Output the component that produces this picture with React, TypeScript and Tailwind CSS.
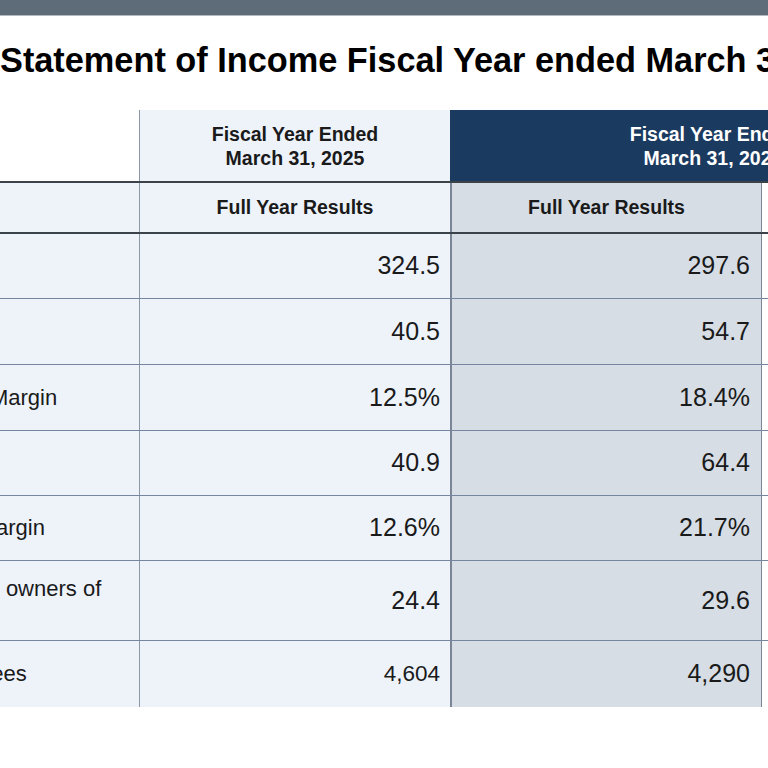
import React from "react";

type Row = { label: React.ReactNode; a: string; b: string; h: string; smallA?: boolean };

const rows: Row[] = [
  { label: "Net Sales", a: "324.5", b: "297.6", h: "h-[65px]" },
  { label: "Operating Income", a: "40.5", b: "54.7", h: "h-[66px]" },
  { label: "Operating Income Margin", a: "12.5%", b: "18.4%", h: "h-[66px]" },
  { label: "Ordinary Income", a: "40.9", b: "64.4", h: "h-[65px]" },
  { label: "Ordinary Income Margin", a: "12.6%", b: "21.7%", h: "h-[65px]" },
  {
    label: (
      <>
        Profit attributable to owners of
        <br />
        parent
      </>
    ),
    a: "24.4",
    b: "29.6",
    h: "h-[80px]",
  },
  { label: "Number of Employees", a: "4,604", b: "4,290", h: "h-[66px]", smallA: true },
];

export default function App() {
  return (
    <div className="w-[768px] h-[768px] overflow-hidden bg-white font-['Liberation_Sans',Arial,sans-serif] text-[#1a1a1a]">
      <div className="h-[16px] bg-[#5e6b79] border-b border-[#b3b9bf]" />
      <div className="mt-[24px] h-[40px] leading-[40px] text-[34.3px] font-bold text-black whitespace-nowrap">
        Statement of Income Fiscal Year ended March 31, 2026
      </div>
      <div className="mt-[30px] ml-[-200px] w-[1176px] flex flex-col">
        {/* header row 1 */}
        <div className="flex h-[73px] border-b-2 border-[#3c424a]">
          <div className="w-[340px] bg-white border-r border-[#8d98a6]" />
          <div className="w-[310px] bg-[#eef3fa] flex flex-col items-center justify-center text-[19.5px] leading-[24px] font-bold text-[#1a1a1a]">
            <span>Fiscal Year Ended</span>
            <span>March 31, 2025</span>
          </div>
          <div className="w-[526px] bg-[#1b3a5f] flex flex-col items-center justify-center text-[19.5px] leading-[24px] font-bold text-white">
            <span>Fiscal Year Ended</span>
            <span>March 31, 2026</span>
          </div>
        </div>
        {/* header row 2 */}
        <div className="flex h-[51px] border-b-2 border-[#3c424a]">
          <div className="w-[340px] bg-[#eef3fa] border-r border-[#8d98a6]" />
          <div className="w-[310px] bg-[#eef3fa] flex items-center justify-center text-[19.5px] font-bold">
            Full Year Results
          </div>
          <div className="w-[312px] bg-[#d6dde5] border-l-2 border-r border-[#7a8595] flex items-center justify-center text-[19.5px] font-bold">
            Full Year Results
          </div>
          <div className="w-[214px] bg-white" />
        </div>
        {rows.map((r, i) => (
          <div
            key={i}
            className={`flex ${r.h} ${i < rows.length - 1 ? "border-b border-[#7786a0]" : ""}`}
          >
            <div className="w-[340px] bg-[#eef3fa] border-r border-[#8d98a6] flex items-center pl-[9px] text-[22px] leading-[24px] whitespace-nowrap">
              <span>{r.label}</span>
            </div>
            <div
              className={`w-[310px] bg-[#eef3fa] flex items-center justify-end pr-[10px] ${
                r.smallA ? "text-[22.5px]" : "text-[25px]"
              }`}
            >
              {r.a}
            </div>
            <div className="w-[312px] bg-[#d6dde5] border-l-2 border-r border-[#7a8595] flex items-center justify-end pr-[11px] text-[25px]">
              {r.b}
            </div>
            <div className="w-[214px] bg-white" />
          </div>
        ))}
      </div>
    </div>
  );
}
